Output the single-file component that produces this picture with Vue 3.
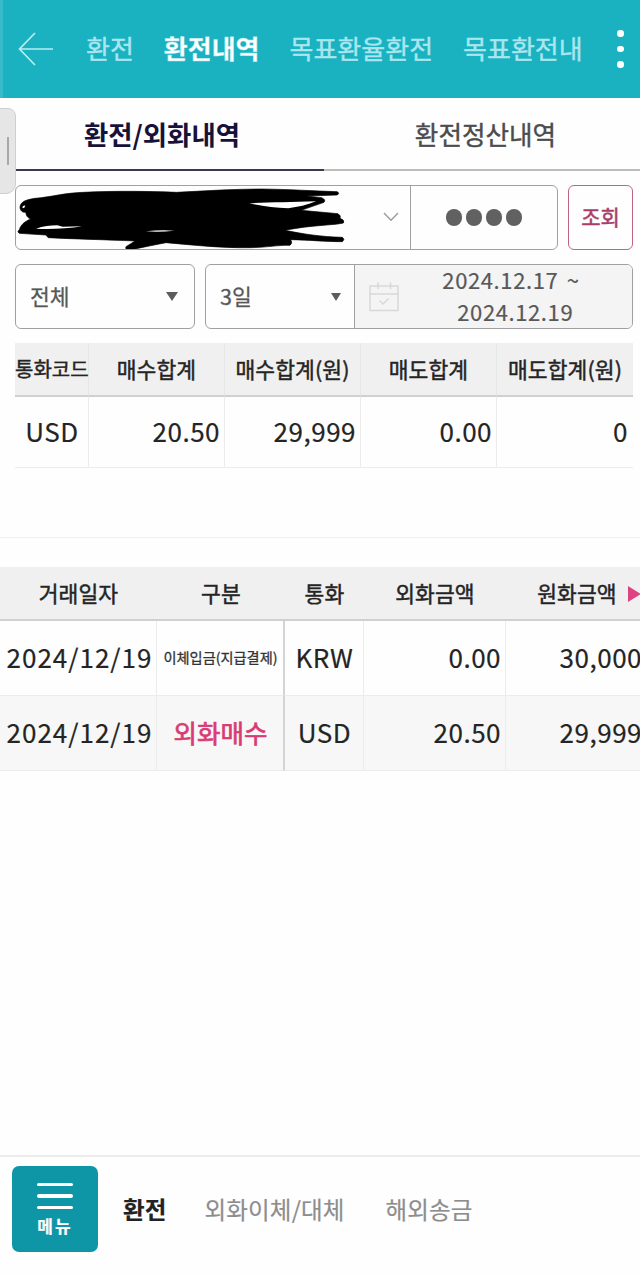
<script setup>
import { ref } from "vue"

const menus = ["환전", "환전내역", "목표환율환전", "목표환전내역"]
const menuAtivo = ref("환전내역")

const tabs = ["환전/외화내역", "환전정산내역"]
const tabAtiva = ref("환전/외화내역")

const resumo = ref([
  { code: "USD", buy: "20.50", buyWon: "29,999", sell: "0.00", sellWon: "0" }
])

const transacoes = ref([
  { date: "2024/12/19", type: "이체입금(지급결제)", small: true, currency: "KRW", amount: "0.00", won: "30,000" },
  { date: "2024/12/19", type: "외화매수", small: false, currency: "USD", amount: "20.50", won: "29,999" }
])

const rodape = ["환전", "외화이체/대체", "해외송금"]
const rodapeAtivo = ref("환전")
</script>

<template>
  <div class="page">
    <header class="topbar">
      <svg class="back" width="36" height="34" viewBox="0 0 36 34">
        <path d="M17 1 L1.500 17 L17 33 M1.500 17 H35" />
      </svg>
      <nav class="menus">
        <a
          v-for="menu in menus"
          :key="menu"
          :class="{ active: menu === menuAtivo }"
          @click="menuAtivo = menu"
        >{{ menu }}</a>
      </nav>
      <div class="more"><i></i><i></i><i></i></div>
    </header>

    <div class="tabs">
      <div
        v-for="tab in tabs"
        :key="tab"
        class="tab"
        :class="{ active: tab === tabAtiva }"
        @click="tabAtiva = tab"
      >{{ tab }}</div>
    </div>

    <section class="filters">
      <div class="row">
        <div class="group account-group">
          <div class="account">
            <svg class="scribble" width="330" height="64" viewBox="45 52 990 192">
              <path
                d="M60 112 C62 94 82 90 105 86 C155 82 190 70 250 68 C350 63 450 65 530 68 C610 64 700 58 785 58 C870 59 940 64 1012 66 Q1020 71 1012 76 L920 79 L965 84 Q979 90 972 98 C950 106 925 114 904 122 L1014 132 Q1024 138 1020 146 Q1034 151 1031 159 C1020 166 930 166 855 182 C910 193 960 201 1027 203 Q1036 209 1027 216 C975 216 930 211 872 210 Q879 220 870 227 C835 226 800 233 755 234 C660 236 560 224 498 219 C460 225 425 235 388 241 Q374 240 378 231 L405 214 C315 210 220 208 145 204 L137 196 L58 191 Q50 186 58 180 C63 165 72 157 92 148 C80 143 79 137 77 128 C69 129 60 124 60 112 Z"
              />
              <path
                class="gap"
                d="M748 101 C805 98 870 98 948 95 C920 106 895 112 865 116 C825 115 785 109 748 101 Z
                   M108 177 C130 170 150 167 172 167 L188 171 L246 170 C205 177 150 179 108 177 Z
                   M438 185 Q480 180 523 183 Q480 188 438 185 Z
                   M66 113 Q70 106 76 108 L72 116 Z"
              />
            </svg>
            <svg class="chevron" width="16" height="10" viewBox="0 0 16 10">
              <path d="M1 1 L8 8.300 L15 1" />
            </svg>
          </div>
          <div class="password"><i v-for="n in 4" :key="n"></i></div>
        </div>
        <button class="search">조회</button>
      </div>

      <div class="row">
        <div class="group select kind">
          <span>전체</span>
          <i class="caret"></i>
        </div>
        <div class="group period-group">
          <div class="select period">
            <span>3일</span>
            <i class="caret small"></i>
          </div>
          <div class="dates">
            <svg width="30" height="30" viewBox="0 0 30 30">
              <path d="M1 4 H29 V28.500 H1 Z M1 12 H29 M9 0.500 V7 M21.500 0.500 V7 M10.500 18.500 L14 22 L19.500 16.500" />
            </svg>
            <p>2024.12.17 ~<br />&nbsp;2024.12.19</p>
          </div>
        </div>
      </div>
    </section>

    <table class="summary">
      <thead>
        <tr>
          <th class="code">통화코드</th>
          <th>매수합계</th>
          <th>매수합계(원)</th>
          <th>매도합계</th>
          <th>매도합계(원)</th>
        </tr>
      </thead>
      <tbody>
        <tr v-for="item in resumo" :key="item.code">
          <td class="center">{{ item.code }}</td>
          <td>{{ item.buy }}</td>
          <td>{{ item.buyWon }}</td>
          <td>{{ item.sell }}</td>
          <td>{{ item.sellWon }}</td>
        </tr>
      </tbody>
    </table>

    <div class="history">
      <table>
        <thead>
          <tr>
            <th class="c-date">거래일자</th>
            <th class="c-type">구분</th>
            <th class="c-cur">통화</th>
            <th class="c-amt">외화금액</th>
            <th class="c-amt">원화금액</th>
          </tr>
        </thead>
        <tbody>
          <tr v-for="(item, i) in transacoes" :key="i">
            <td class="center date">{{ item.date }}</td>
            <td class="center type" :class="{ mini: item.small }">{{ item.type }}</td>
            <td class="center">{{ item.currency }}</td>
            <td>{{ item.amount }}</td>
            <td>{{ item.won }}</td>
          </tr>
        </tbody>
      </table>
      <i class="next"></i>
    </div>

    <footer class="bottombar">
      <button class="menu">
        <i></i><i></i><i></i>
        <span>메뉴</span>
      </button>
      <a
        v-for="item in rodape"
        :key="item"
        :class="{ active: item === rodapeAtivo }"
        @click="rodapeAtivo = item"
      >{{ item }}</a>
    </footer>

    <div class="handle"></div>
  </div>
</template>

<style>
body {
  margin: 0;
  background: #fefefe;
}
</style>

<style scoped>
* {
  box-sizing: border-box;
}

.page {
  position: relative;
  display: flex;
  flex-direction: column;
  width: 640px;
  height: 1275px;
  overflow: hidden;
  background: #fefefe;
  color: #242424;
  font-family: "Noto Sans CJK KR", "Noto Sans", sans-serif;
}

.topbar {
  display: flex;
  align-items: center;
  flex: none;
  height: 98px;
  padding: 0 14px 0 15px;
  background: #1ab1c1;
  border-left: 3px solid #38bccb;
}

.back {
  flex: none;
  fill: none;
  stroke: #b9edf2;
  stroke-width: 1.7;
}

.menus {
  display: flex;
  flex: none;
  gap: 30px;
  width: 497px;
  margin: -2px 0 0 32px;
  overflow: hidden;
  white-space: nowrap;
  font-size: 26px;
  line-height: 40px;
  color: #a9e6ee;
  -webkit-text-stroke: 0.4px #a9e6ee;
}

.menus a.active {
  color: #fff;
  font-weight: 700;
}

.more {
  display: flex;
  flex-direction: column;
  gap: 9px;
  margin-left: 34px;
}

.more i {
  width: 6.5px;
  height: 6.5px;
  border-radius: 50%;
  background: #fff;
}

.tabs {
  display: flex;
  flex: none;
  height: 73px;
}

.tab {
  flex: 1;
  padding: 16px 0 0 7px;
  border-bottom: 2px solid #bcbebe;
  text-align: center;
  font-size: 25.6px;
  line-height: 40px;
  color: #4c4c4c;
  -webkit-text-stroke: 0.4px #4c4c4c;
}

.tab.active {
  flex: 0 0 324px;
  padding-left: 0;
  border-color: #3c3850;
  font-size: 26.4px;
  color: #17123a;
  font-weight: 700;
  -webkit-text-stroke: 0;
}

.filters {
  display: flex;
  flex-direction: column;
  flex: none;
  gap: 14px;
  padding: 14px 7px 0 15px;
}

.row {
  display: flex;
  gap: 10px;
  height: 65px;
}

.group {
  display: flex;
  border: 1.5px solid #a0a0a0;
  border-radius: 6px;
  overflow: hidden;
  color: #585858;
}

.account-group {
  flex: 1;
}

.account {
  position: relative;
  display: flex;
  align-items: center;
  justify-content: flex-end;
  width: 395px;
  padding-right: 11px;
  border-right: 1px solid #a0a0a0;
}

.scribble {
  position: absolute;
  left: -1px;
  top: 1px;
  fill: #000;
  stroke: #000;
  stroke-width: 2;
}

.scribble .gap {
  fill: #fefefe;
  stroke: none;
}

.chevron {
  margin-bottom: 2px;
  fill: none;
  stroke: #999;
  stroke-width: 1.3;
}

.password {
  display: flex;
  flex: 1;
  align-items: center;
  justify-content: center;
  gap: 3.5px;
}

.password i {
  width: 16.5px;
  height: 16.5px;
  border-radius: 50%;
  background: #616161;
}

.search {
  width: 65px;
  padding: 0 0 3px;
  border: 1.5px solid #bd6587;
  border-radius: 6px;
  background: #fefefe;
  font-family: inherit;
  font-size: 21px;
  color: #a93d69;
  -webkit-text-stroke: 0.5px #a93d69;
}

.select {
  display: flex;
  align-items: center;
  justify-content: space-between;
  font-size: 21.5px;
  -webkit-text-stroke: 0.3px #585858;
}

.select span {
  margin-top: -2px;
}

.kind {
  width: 180px;
  padding: 0 16px 0 14px;
}

.period-group {
  flex: 1;
}

.period {
  width: 149px;
  padding: 0 13px 0 14px;
  border-right: 1px solid #a0a0a0;
}

.caret {
  border: 6.5px solid transparent;
  border-top: 9px solid #5c5c5c;
  border-bottom: 0;
}

.caret.small {
  border-width: 8px 5.5px 0;
}

.dates {
  display: flex;
  flex: 1;
  align-items: center;
  background: #f4f4f4;
  padding-left: 14px;
}

.dates svg {
  flex: none;
  fill: none;
  stroke: #d8d8d8;
  stroke-width: 1.5;
}

.dates p {
  flex: 1;
  margin: -4px 0 0;
  padding-right: 9px;
  text-align: center;
  font-size: 22px;
  line-height: 32px;
  letter-spacing: 0.6px;
  word-spacing: 3px;
  -webkit-text-stroke: 0.2px #585858;
}

table {
  border-collapse: separate;
  border-spacing: 0;
  table-layout: fixed;
}

th {
  height: 54px;
  padding: 0;
  background: #f0f0f0;
  border-bottom: 2px solid #d0d0d0;
  font-size: 21.5px;
  font-weight: 400;
  line-height: 30px;
  letter-spacing: 0.1px;
  white-space: nowrap;
  -webkit-text-stroke: 0.45px #242424;
}

td {
  padding: 0 4px 2px 0;
  border-bottom: 1.5px solid #ececec;
  border-right: 1.5px solid #ececec;
  text-align: right;
  font-size: 26px;
  line-height: 34px;
  letter-spacing: 0.5px;
  white-space: nowrap;
  -webkit-text-stroke: 0.2px #242424;
}

td.center {
  padding: 0 0 2px 1px;
  text-align: center;
}

.summary {
  flex: none;
  width: 618px;
  margin: 14px 0 0 15px;
}

.summary th {
  border-right: 1.5px solid #e6e6e6;
}

.summary .code {
  width: 74px;
  font-size: 20px;
  letter-spacing: 0;
}

.summary td {
  height: 71px;
}

.summary th:last-child,
.summary td:last-child {
  border-right: 0;
}

.summary td:last-child {
  padding-right: 5px;
}

.history {
  position: relative;
  flex: none;
  margin-top: 69px;
  padding-top: 29px;
  border-top: 1.5px solid #efefef;
  overflow: hidden;
}

.history table {
  width: 648px;
}

.c-date {
  width: 157px;
}

.c-type {
  width: 128px;
}

.c-cur {
  width: 79px;
}

.history td {
  height: 75px;
}

.history td:last-child {
  padding-right: 5px;
}

.history tbody tr:nth-child(2) {
  background: #f7f7f7;
}

.history td.date {
  padding-left: 3px;
  letter-spacing: 1px;
}

.history td.type {
  border-right: 2px solid #d4d4d4;
  font-size: 25.5px;
  color: #d93b75;
  letter-spacing: 0;
  -webkit-text-stroke: 0.7px #d93b75;
}

.history td.mini {
  font-size: 14.2px;
  color: #333;
  -webkit-text-stroke: 0.3px #333;
}

.next {
  position: absolute;
  top: 48px;
  left: 628px;
  border: 8px solid transparent;
  border-left: 13px solid #dc4480;
  border-right: 0;
}

.bottombar {
  display: flex;
  align-items: center;
  flex: none;
  gap: 38px;
  height: 120px;
  margin-top: auto;
  padding: 0 12px 15px;
  border-top: 2px solid #ececec;
  font-size: 23.5px;
  letter-spacing: 0.15px;
  color: #8d8d8d;
  -webkit-text-stroke: 0.2px;
}

.bottombar a:last-child {
  margin-left: 3px;
}

.bottombar a.active {
  margin-left: -13px;
  color: #222;
  font-weight: 700;
}

.menu {
  display: flex;
  flex-direction: column;
  align-items: center;
  width: 86px;
  height: 86px;
  padding: 17px 0 0;
  border: 0;
  border-radius: 7px;
  background: #0e96a7;
  color: #fff;
  font-family: inherit;
}

.menu i {
  width: 36px;
  height: 3.5px;
  margin-bottom: 8px;
  border-radius: 2px;
  background: #fff;
}

.menu span {
  margin-top: -3px;
  font-size: 17px;
  font-weight: 700;
  line-height: 24px;
  letter-spacing: 2px;
}

/* side panel handle peeking in from the left edge */
.handle {
  position: absolute;
  left: -2px;
  top: 108px;
  width: 18px;
  height: 86px;
  border: 1px solid #cfcfcf;
  border-radius: 0 8px 10px 0;
  background: #e6e6e6;
}

.handle::after {
  content: "";
  position: absolute;
  left: 8px;
  top: 28px;
  width: 1.5px;
  height: 28px;
  background: #a8a8a8;
}
</style>
